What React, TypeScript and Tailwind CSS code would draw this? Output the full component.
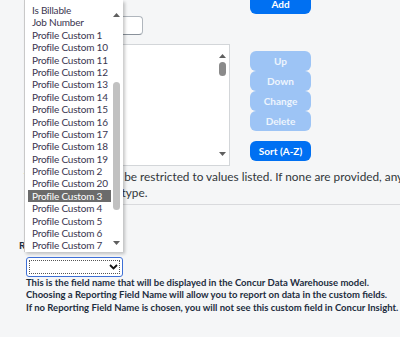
import React from 'react';

const listItems = [
  'Is Billable',
  'Job Number',
  'Profile Custom 1',
  'Profile Custom 10',
  'Profile Custom 11',
  'Profile Custom 12',
  'Profile Custom 13',
  'Profile Custom 14',
  'Profile Custom 15',
  'Profile Custom 16',
  'Profile Custom 17',
  'Profile Custom 18',
  'Profile Custom 19',
  'Profile Custom 2',
  'Profile Custom 20',
  'Profile Custom 3',
  'Profile Custom 4',
  'Profile Custom 5',
  'Profile Custom 6',
  'Profile Custom 7',
];

function ArrowUp({ className }: { className?: string }) {
  return (
    <svg className={className} width="7" height="4" viewBox="0 0 7 4">
      <path d="M0 4 L3.5 0 L7 4 Z" fill="#5f5f5f" />
    </svg>
  );
}

function ArrowDown({ className }: { className?: string }) {
  return (
    <svg className={className} width="7" height="4" viewBox="0 0 7 4">
      <path d="M0 0 L7 0 L3.5 4 Z" fill="#5f5f5f" />
    </svg>
  );
}

function ActionButton({ label, disabled }: { label: string; disabled?: boolean }) {
  return (
    <div
      className={
        disabled
          ? 'h-[20px] w-[61px] rounded-[6px] bg-[#9dc4f5] text-[#eef5fd] text-[10px] font-bold flex items-center justify-center'
          : 'h-[20px] w-[61px] rounded-[6px] bg-[#0070f2] text-white text-[10px] font-bold flex items-center justify-center'
      }
    >
      {label}
    </div>
  );
}

export default function App() {
  return (
    <div className="relative w-[400px] h-[337px] overflow-hidden bg-[#f5f6f7] font-['Lato','Liberation_Sans',sans-serif] text-[#32363a]">
      <div className="-mt-[6px] pl-[19px]">
        <div className="pl-[5px]">
          <div className="flex">
            <div className="w-[206px]">
              <div className="mt-[22px] h-[19px] w-[119px] rounded-[4px] border border-[#b0b6bd] border-b-[#89919a] bg-white" />
              <div className="relative mt-[9px] h-[122px] w-[206px] border border-[#d3d6d9] bg-white">
                <div className="absolute right-[2px] top-0 bottom-0 w-[10px] flex flex-col items-center">
                  <ArrowUp className="mt-[9px]" />
                  <div className="mt-[4px] h-[14px] w-[7px] rounded-full bg-[#8a8a8a]" />
                  <div className="flex-1" />
                  <ArrowDown className="mb-[9px]" />
                </div>
              </div>
            </div>
            <div className="ml-[20px] flex flex-col">
              <ActionButton label="Add" />
              <div className="mt-[37px]">
                <ActionButton label="Up" disabled />
                <ActionButton label="Down" disabled />
                <ActionButton label="Change" disabled />
                <ActionButton label="Delete" disabled />
              </div>
              <div className="mt-[10px]">
                <ActionButton label="Sort (A-Z)" />
              </div>
            </div>
          </div>
          <div className="mt-[3px] text-[11.8px] leading-[16px] whitespace-nowrap">
            <div>Values entered will be restricted to values listed. If none are provided, any value may be entered</div>
            <div>entries of the data type.</div>
          </div>
          <div className="mt-[3px] border-t border-[#d9dadd]" />
        </div>
        <div className="mt-[32px] text-[10px] leading-[16px] font-bold text-[#1d2d3e] whitespace-nowrap">Reporting Field Name</div>
        <div className="ml-[7px]">
          <div className="relative mt-[4px] h-[20px] w-[97px] rounded-[3px] border-[1.5px] border-[#3d6fd6] bg-white">
            <div className="absolute inset-[2px] border border-dotted border-[#555]" />
            <svg className="absolute right-[4px] top-[6px]" width="9" height="6" viewBox="0 0 9 6">
              <path d="M1 1 L4.5 4.5 L8 1" fill="none" stroke="#111" strokeWidth="1.8" />
            </svg>
          </div>
          <div className="text-[9.5px] leading-[12.3px] font-bold text-[#1d2d3e] whitespace-nowrap">
            <div>This is the field name that will be displayed in the Concur Data Warehouse model.</div>
            <div>Choosing a Reporting Field Name will allow you to report on data in the custom fields.</div>
            <div>If no Reporting Field Name is chosen, you will not see this custom field in Concur Insight.</div>
          </div>
        </div>
      </div>

      <div className="absolute left-[24px] top-0 h-[252px] w-[99px] border-l border-[#c9c9c9] bg-white shadow-[2px_2px_3px_rgba(0,0,0,0.22)]">
        <div className="pt-[4px] pl-[3px] w-[86px]">
          {listItems.map((item) => (
            <div
              key={item}
              className={
                item === 'Profile Custom 3'
                  ? 'h-[12.4px] w-[83px] overflow-hidden pl-[4px] text-[10px] tracking-[-0.2px] leading-[12.4px] whitespace-nowrap bg-[#6b6b6b] text-white'
                  : 'h-[12.4px] w-[83px] overflow-hidden pl-[4px] text-[10px] tracking-[-0.2px] leading-[12.4px] whitespace-nowrap text-[#3a3650]'
              }
            >
              {item}
            </div>
          ))}
        </div>
        <div className="absolute right-0 top-0 bottom-0 w-[13px] flex flex-col items-center">
          <ArrowUp className="mt-[13px]" />
          <div className="mt-[65px] h-[128px] w-[7px] rounded-full bg-[#c1c1c1]" />
          <div className="flex-1" />
          <ArrowDown className="mb-[7px]" />
        </div>
      </div>
    </div>
  );
}
